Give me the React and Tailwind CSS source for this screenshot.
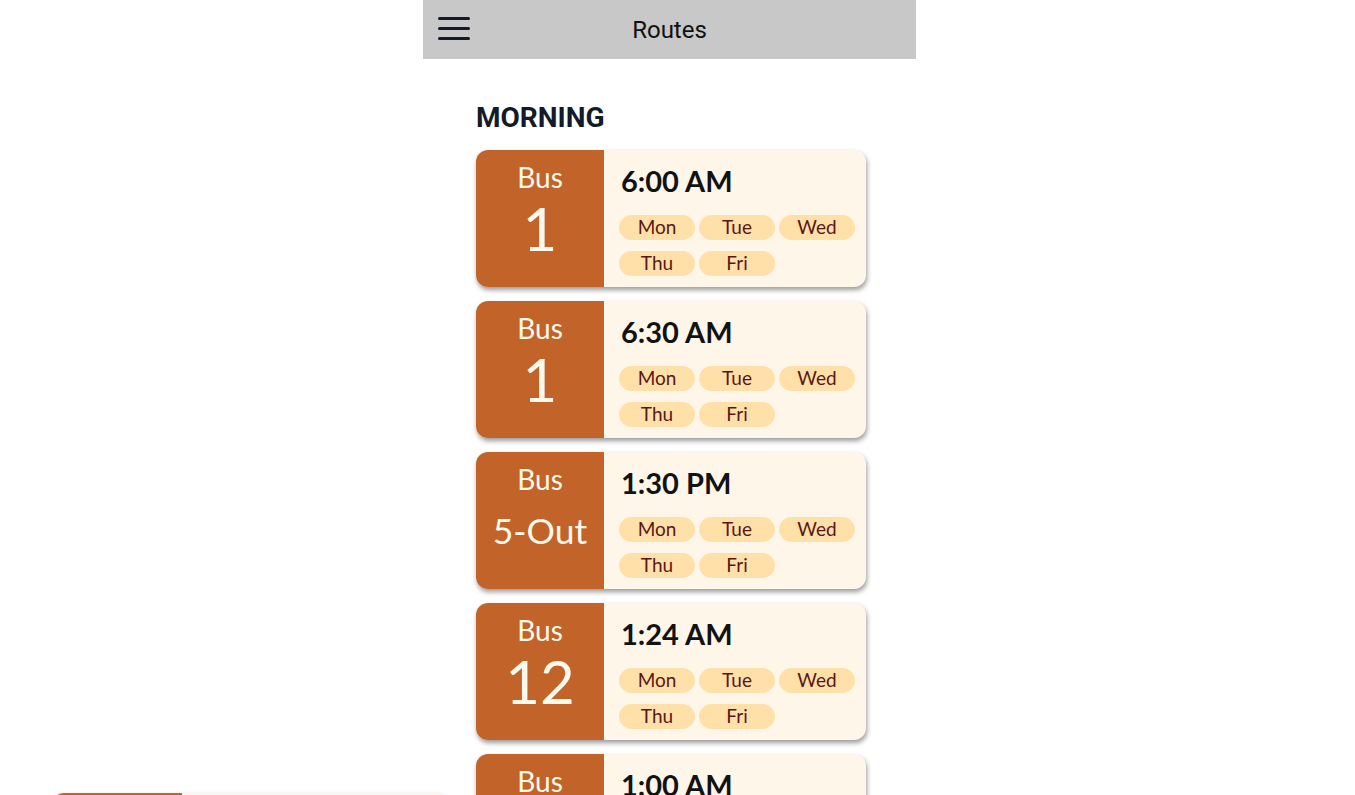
const routes = [
  { bus: '1', time: '6:00 AM' },
  { bus: '1', time: '6:30 AM' },
  { bus: '5-Out', time: '1:30 PM' },
  { bus: '12', time: '1:24 AM' },
  { bus: '3', time: '1:00 AM' },
];

const DAYS = ['Mon', 'Tue', 'Wed', 'Thu', 'Fri'];

function RouteCard({ bus, time }) {
  const short = bus.length <= 2;
  return (
    <div className="flex h-[137px] w-[390px] shrink-0 overflow-hidden rounded-[12px] bg-[#fef6e9] shadow-[1px_3px_5px_rgba(0,0,0,0.4)] font-['Lato','Open_Sans',sans-serif]">
      <div className="flex w-[128px] shrink-0 flex-col items-center bg-[#c26429] pt-[8px] text-[#fff8ec]">
        <div className="text-[28px] leading-[38px]">Bus</div>
        <div className={short ? 'text-[60px] leading-[64px]' : 'mt-[10px] text-[35.5px] leading-[46px]'}>{bus}</div>
      </div>
      <div className="flex-1 pl-[15px] pt-[13px]">
        <div className="pl-[2px] text-[29px] font-bold leading-[36px] text-[#121212]">{time}</div>
        <div className="mt-[16px] grid w-[236px] grid-cols-3 gap-x-[4px] gap-y-[11px]">
          {DAYS.map((d) => (
            <span key={d} className="flex h-[25px] items-center justify-center rounded-full bg-[#ffe0a9] text-[19px] text-[#5a1616]">
              {d}
            </span>
          ))}
        </div>
      </div>
    </div>
  );
}

export default function App() {
  return (
    <div className="relative h-[795px] overflow-hidden bg-white font-['Roboto',sans-serif]">
      <div className="w-[1339px]">
        <div className="mx-auto w-[493px]">
          <header className="relative flex h-[59px] items-center justify-center bg-[#c8c8c8]">
            <button className="absolute left-[15px] top-[17px] flex w-[32px] flex-col gap-[7px]">
              <span className="h-[3px] rounded-full bg-[#141a2a]" />
              <span className="h-[3px] rounded-full bg-[#141a2a]" />
              <span className="h-[3px] rounded-full bg-[#141a2a]" />
            </button>
            <h1 className="text-[24px] text-[#111]">Routes</h1>
          </header>
          <main className="pl-[53px] pt-[42px]">
            <h2 className="text-[28px] font-bold leading-[34px] text-[#141a28]">MORNING</h2>
            <div className="mt-[15px] flex flex-col gap-[14px]">
              {routes.map((r, i) => (
                <RouteCard key={i} {...r} />
              ))}
            </div>
          </main>
        </div>
      </div>
      <div className="absolute left-[52px] top-[793px] flex h-[137px] w-[395px] overflow-hidden rounded-[12px] bg-[#fef6e9] shadow-[1px_3px_5px_rgba(0,0,0,0.4)]">
        <div className="w-[130px] bg-[#c26429]" />
        <div className="pl-[18px] font-['Lato',sans-serif] text-[29px] font-bold leading-[26px] text-[#121212]">FIRST</div>
      </div>
    </div>
  );
}
